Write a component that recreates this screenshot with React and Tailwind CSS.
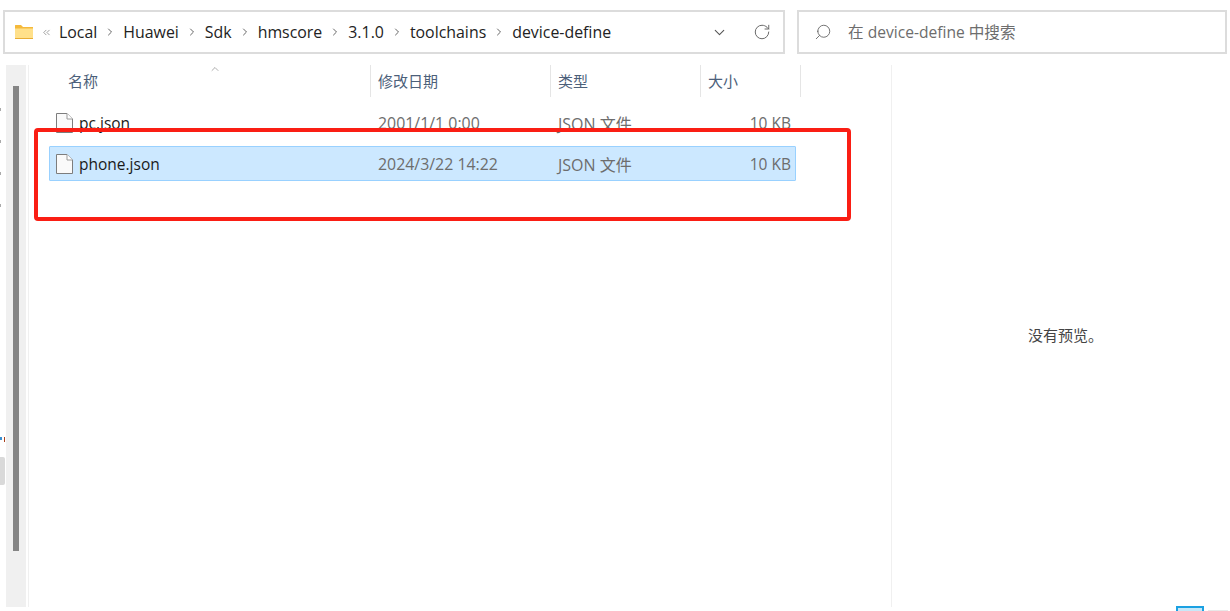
import { ChevronDown, ChevronRight, ChevronUp, ChevronsLeft, RotateCw, Search } from "lucide-react";

const FONT = "font-['Open_Sans','Noto_Sans_CJK_SC',sans-serif]";

const crumbs = ["Local", "Huawei", "Sdk", "hmscore", "3.1.0", "toolchains", "device-define"];

function FolderIcon() {
  return (
    <svg width="18" height="16" viewBox="0 0 18 16" className="shrink-0">
      <path d="M0 1.5 Q0 1 .5 1 H6 L8 3 H18 V15 H0 Z" fill="#f5b93a" />
      <path d="M0 4.5 H18 V14.5 H0 Z" fill="#ffe08a" />
      <path d="M0 14 H18 V15 H0 Z" fill="#e8ad35" />
    </svg>
  );
}

function FileIcon() {
  return (
    <svg width="17" height="20" viewBox="0 0 17 20" className="shrink-0">
      <path d="M.5.5 H11 L16.5 6 V19.5 H.5 Z" fill="#fafafa" stroke="#7d7d7d" />
      <path d="M11 .5 V6 H16.5" fill="#fff" stroke="#9a9a9a" />
    </svg>
  );
}

function FileRow({ name, date, selected }) {
  return (
    <div
      className={`flex items-center h-[35px] w-[747px] rounded-[1px] border ${
        selected ? "bg-[#cce8ff] border-[#99d1ff]" : "border-transparent"
      }`}
    >
      <div className="flex items-center w-[328px] pl-[6px] gap-[6px]">
        <FileIcon />
        <span className="pt-[2px] text-[15.5px] text-[#1a1a1a]">{name}</span>
      </div>
      <span className="w-[180px] pt-[2px] text-[15.9px] text-[#6d6d6d]">{date}</span>
      <span className="w-[140px] pt-[2px] text-[16px] text-[#6d6d6d]">JSON 文件</span>
      <span className="w-[93px] pt-[2px] text-right text-[15.5px] text-[#6d6d6d]">10 KB</span>
    </div>
  );
}

export default function App() {
  return (
    <div className={`relative h-[611px] w-[1230px] overflow-hidden bg-white ${FONT}`}>
      {/* 상단 주소창 / 검색창 */}
      <div className="flex gap-[12px] pl-[3px] pt-[10px]">
        <div className="flex items-center h-[44px] w-[782px] border-2 border-[#dcdcdc] pl-[10px]">
          <FolderIcon />
          <ChevronsLeft size={11} strokeWidth={1.5} className="ml-[8px] text-[#777]" />
          <div className="flex items-center ml-[7px]">
            {crumbs.map((c, i) => (
              <div key={c} className="flex items-center">
                <span className="pt-[2px] text-[15.9px] text-[#222]">{c}</span>
                {i < crumbs.length - 1 && (
                  <ChevronRight size={12} strokeWidth={2} className="mx-[7px] text-[#666]" />
                )}
              </div>
            ))}
          </div>
          <ChevronDown size={17} strokeWidth={1.5} className="ml-auto -translate-x-[7px] text-[#555]" />
          <RotateCw size={18} strokeWidth={1.3} className="ml-[18px] mr-[12px] text-[#666]" />
        </div>
        <div className="flex items-center h-[44px] w-[430px] border-2 border-[#dcdcdc] pl-[15px]">
          <Search size={18} strokeWidth={1.2} className="-scale-x-100 text-[#666]" />
          <span className="ml-[16px] pt-[2px] text-[15.6px] text-[#6d6d6d]">在 device-define 中搜索</span>
        </div>
      </div>

      {/* 본문 */}
      <div className="flex h-[542px] mt-[11px]">
        <div className="relative w-[6px]">
          <div className="flex flex-col gap-[29px] pt-[43px]">
            <div className="w-[1px] h-[3px] bg-[#aaa]" />
            <div className="w-[1px] h-[3px] bg-[#aaa]" />
            <div className="w-[1px] h-[3px] bg-[#aaa]" />
            <div className="w-[1px] h-[3px] bg-[#aaa]" />
          </div>
          <div className="absolute left-0 top-[372px] w-[2px] h-[3px] bg-[#3a8fd0]" />
          <div className="absolute left-[4px] top-[372px] w-[1px] h-[5px] bg-[#a8401c]" />
          <div className="absolute left-0 top-[392px] w-[5px] h-[28px] rounded-r-[2px] bg-[#d9d9d9]" />
        </div>
        <div className="w-[20px] bg-[#f0f0f0] pl-[7px] pt-[21px]">
          <div className="w-[6px] h-[465px] bg-[#858585]" />
        </div>
        <div className="w-[2px]" />
        <div className="w-[864px] border-l border-[#f0f0f0] border-r">
          <div className="relative flex h-[32px] text-[15px] text-[#4c607a]">
            <div className="flex items-center w-[342px] pl-[39px] border-r border-[#e5e5e5]">名称</div>
            <ChevronUp size={12} strokeWidth={1.2} className="absolute left-[180px] -top-[2px] text-[#777]" />
            <div className="flex items-center w-[180px] pl-[7px] border-r border-[#e5e5e5]">修改日期</div>
            <div className="flex items-center w-[150px] pl-[7px] border-r border-[#e5e5e5]">类型</div>
            <div className="flex items-center w-[100px] pl-[7px] border-r border-[#e5e5e5]">大小</div>
          </div>
          <div className="flex flex-col gap-[6px] pl-[20px] pt-[8px]">
            <FileRow name="pc.json" date="2001/1/1 0:00" />
            <FileRow name="phone.json" date="2024/3/22 14:22" selected />
          </div>
        </div>
        <div className="flex flex-1 items-center justify-center pl-[9px] pb-[2px] text-[15px] text-[#444]">
          <span>没有预览。</span>
        </div>
      </div>

      {/* 빨간 강조 박스 */}
      <div className="absolute left-[34px] top-[128px] w-[817px] h-[93px] rounded-[4px] border-[4px] border-[#fa1e14]" />
      {/* 우측 하단 조각 */}
      <div className="absolute left-[1176px] top-[606px] w-[28px] h-[5px] border-2 border-b-0 border-[#1ba1e2] bg-[#c7e8f8]" />
      <div className="absolute left-[1208px] top-[610px] w-[20px] h-[1px] bg-[#e8e8e8]" />
    </div>
  );
}
